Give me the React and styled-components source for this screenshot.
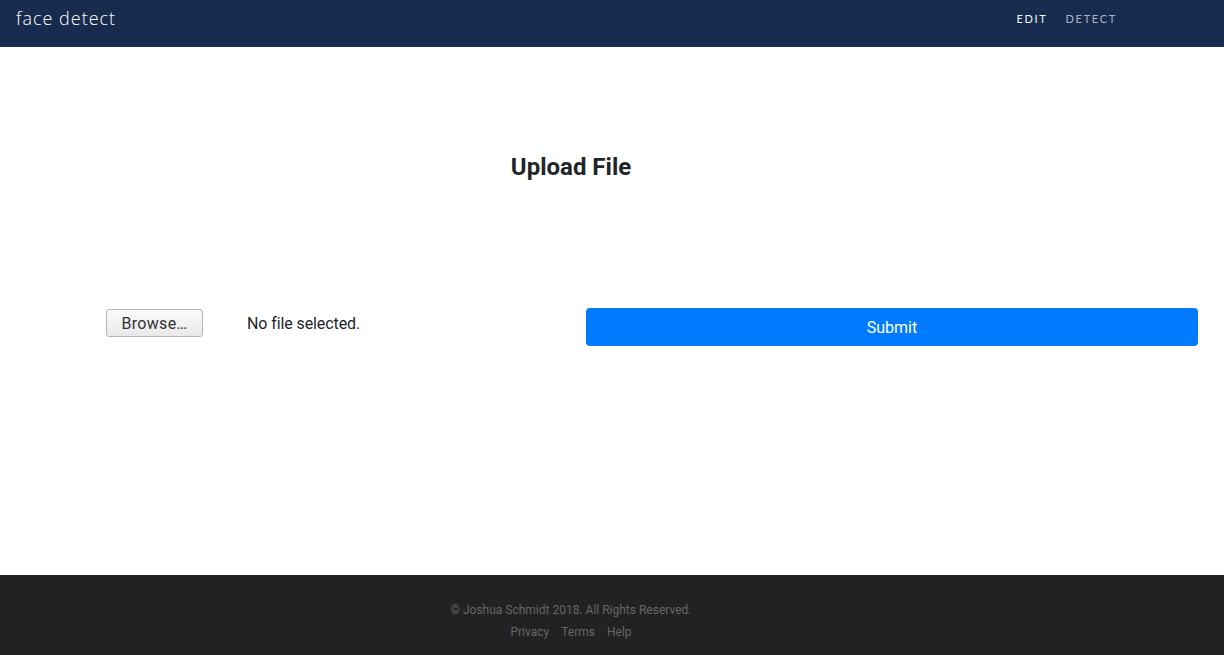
import React from "react";
import styled, { createGlobalStyle } from "styled-components";

const GlobalStyle = createGlobalStyle`
  html, body {
    margin: 0;
    padding: 0;
    background: #fff;
    font-family: Roboto, "Liberation Sans", sans-serif;
    color: #212529;
  }
`;

const Page = styled.div`
  display: flex;
  flex-direction: column;
  min-height: 655px;
`;

const Header = styled.header`
  height: 47px;
  background: #172b4e;
  display: flex;
  align-items: flex-start;
  justify-content: space-between;
  padding: 0 107px 0 16px;
`;

const Brand = styled.div`
  font-family: "Open Sans", sans-serif;
  font-weight: 300;
  font-size: 18px;
  letter-spacing: 1px;
  color: #fff;
  line-height: 36px;
`;

const Nav = styled.nav`
  display: flex;
  gap: 18px;
  padding-top: 12px;
`;

const NavLink = styled.a`
  font-family: Lato, sans-serif;
  font-size: 11px;
  letter-spacing: 1.7px;
  text-transform: uppercase;
  color: ${({ $active }) => ($active ? "#f4f6fa" : "#a8b4c6")};
  text-decoration: none;
`;

const Main = styled.main`
  flex: 1;
  display: flex;
  flex-direction: column;
`;

const Title = styled.h1`
  width: 1142px;
  margin: 104px 0 0;
  text-align: center;
  font-size: 24px;
  font-weight: 700;
  line-height: 32px;
  color: #212529;
`;

const FormRow = styled.div`
  display: grid;
  grid-template-columns: 480px 1fr;
  align-items: start;
  padding: 125px 26px 0 106px;
`;

const FileField = styled.div`
  display: flex;
  align-items: center;
  gap: 44px;
  padding-top: 1px;
`;

const BrowseButton = styled.span`
  display: inline-flex;
  align-items: center;
  justify-content: center;
  width: 97px;
  height: 28px;
  box-sizing: border-box;
  padding-top: 1px;
  border: 1px solid #b5b5b5;
  border-radius: 3px;
  background: linear-gradient(#fbfbfb, #e9e9e9);
  font-size: 16px;
  letter-spacing: 0.3px;
  color: #333;
`;

const FileName = styled.span`
  font-size: 16px;
  letter-spacing: -0.1px;
  color: #212529;
`;

const SubmitButton = styled.button`
  height: 38px;
  border: none;
  border-radius: 4px;
  background: #007bff;
  color: #fff;
  font-family: Roboto, sans-serif;
  font-size: 16px;
  cursor: pointer;
`;

const Footer = styled.footer`
  height: 80px;
  background: #222;
  display: flex;
  flex-direction: column;
  align-items: center;
  width: 100%;
  box-sizing: border-box;
  padding: 27px 82px 0 0;
  font-size: 12px;
  color: #666;
`;

const Copy = styled.div`
  line-height: 16px;
`;

const FooterLinks = styled.div`
  display: flex;
  gap: 12px;
  margin-top: 6px;
  line-height: 16px;
`;

const FooterLink = styled.a`
  color: #666;
  text-decoration: none;
`;

export default function App() {
  return (
    <Page>
      <GlobalStyle />
      <Header>
        <Brand>face detect</Brand>
        <Nav>
          <NavLink $active>Edit</NavLink>
          <NavLink>Detect</NavLink>
        </Nav>
      </Header>
      <Main>
        <Title>Upload File</Title>
        <FormRow>
          <FileField>
            <BrowseButton>Browse…</BrowseButton>
            <FileName>No file selected.</FileName>
          </FileField>
          <SubmitButton>Submit</SubmitButton>
        </FormRow>
      </Main>
      <Footer>
        <Copy>© Joshua Schmidt 2018. All Rights Reserved.</Copy>
        <FooterLinks>
          <FooterLink>Privacy</FooterLink>
          <FooterLink>Terms</FooterLink>
          <FooterLink>Help</FooterLink>
        </FooterLinks>
      </Footer>
    </Page>
  );
}
